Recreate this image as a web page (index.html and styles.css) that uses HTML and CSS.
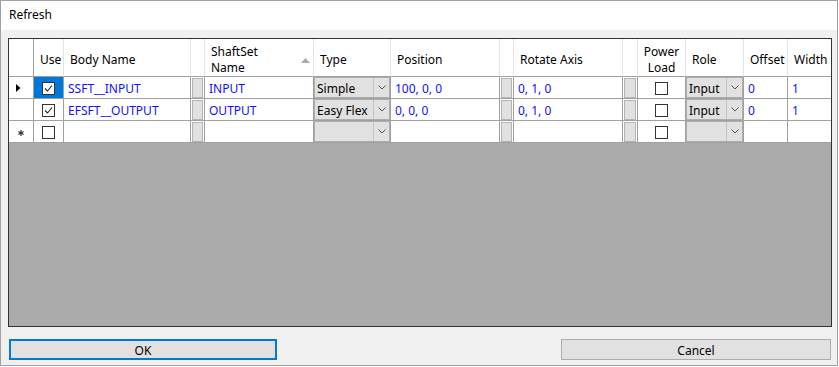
FILE: index.html
```html
<!DOCTYPE html>
<html lang="en">
<head>
    <meta charset="UTF-8">
    <title>Refresh</title>
    <link rel="stylesheet" href="styles.css">
</head>
<body>

<div class="dialog">
    <div class="titlebar">Refresh</div>

    <div class="content">
        <div class="grid">
            <table class="rows">
                <tr>
                    <th class="w-hdr"></th>
                    <th class="w-use">Use</th>
                    <th class="w-body">Body Name</th>
                    <th class="w-btn"></th>
                    <th class="w-shaft">
                        <div class="sort-head">
                            <span>ShaftSet<br>Name</span>
                            <svg class="sort-arrow" width="9" height="5" viewBox="0 0 9 5"><polygon points="0,5 4.5,0 9,5" fill="#a8a8a8"/></svg>
                        </div>
                    </th>
                    <th class="w-type">Type</th>
                    <th class="w-pos">Position</th>
                    <th class="w-btn"></th>
                    <th class="w-rot">Rotate Axis</th>
                    <th class="w-btn2"></th>
                    <th class="w-power center">Power<br>Load</th>
                    <th class="w-role">Role</th>
                    <th class="w-offset">Offset</th>
                    <th class="w-width last">Width</th>
                </tr>
                <tr>
                    <td class="rowhead">
                        <svg width="5" height="8" viewBox="0 0 5 8"><polygon points="0,0 4.5,4 0,8" fill="#000"/></svg>
                    </td>
                    <td class="check selected">
                        <span class="box"><svg width="11" height="11" viewBox="0 0 11 11"><polyline points="2,5.5 4.5,8 9,2.5" fill="none" stroke="#222" stroke-width="1.1"/></svg></span>
                    </td>
                    <td class="txt">SSFT__INPUT</td>
                    <td class="btn-cell"><span class="cell-btn"></span></td>
                    <td class="txt">INPUT</td>
                    <td class="combo-cell">
                        <div class="combo"><span class="combo-text">Simple</span><span class="combo-arrow"><svg width="8" height="5" viewBox="0 0 8 5"><polyline points="0.5,0.5 4,4 7.5,0.5" fill="none" stroke="#555" stroke-width="1"/></svg></span></div>
                    </td>
                    <td class="txt">100, 0, 0</td>
                    <td class="btn-cell"><span class="cell-btn"></span></td>
                    <td class="txt">0, 1, 0</td>
                    <td class="btn-cell"><span class="cell-btn"></span></td>
                    <td class="check"><span class="box"></span></td>
                    <td class="combo-cell">
                        <div class="combo"><span class="combo-text">Input</span><span class="combo-arrow"><svg width="8" height="5" viewBox="0 0 8 5"><polyline points="0.5,0.5 4,4 7.5,0.5" fill="none" stroke="#555" stroke-width="1"/></svg></span></div>
                    </td>
                    <td class="txt">0</td>
                    <td class="txt last">1</td>
                </tr>
                <tr>
                    <td class="rowhead"></td>
                    <td class="check">
                        <span class="box"><svg width="11" height="11" viewBox="0 0 11 11"><polyline points="2,5.5 4.5,8 9,2.5" fill="none" stroke="#222" stroke-width="1.1"/></svg></span>
                    </td>
                    <td class="txt">EFSFT__OUTPUT</td>
                    <td class="btn-cell"><span class="cell-btn"></span></td>
                    <td class="txt">OUTPUT</td>
                    <td class="combo-cell">
                        <div class="combo"><span class="combo-text">Easy Flex</span><span class="combo-arrow"><svg width="8" height="5" viewBox="0 0 8 5"><polyline points="0.5,0.5 4,4 7.5,0.5" fill="none" stroke="#555" stroke-width="1"/></svg></span></div>
                    </td>
                    <td class="txt">0, 0, 0</td>
                    <td class="btn-cell"><span class="cell-btn"></span></td>
                    <td class="txt">0, 1, 0</td>
                    <td class="btn-cell"><span class="cell-btn"></span></td>
                    <td class="check"><span class="box"></span></td>
                    <td class="combo-cell">
                        <div class="combo"><span class="combo-text">Input</span><span class="combo-arrow"><svg width="8" height="5" viewBox="0 0 8 5"><polyline points="0.5,0.5 4,4 7.5,0.5" fill="none" stroke="#555" stroke-width="1"/></svg></span></div>
                    </td>
                    <td class="txt">0</td>
                    <td class="txt last">1</td>
                </tr>
                <tr>
                    <td class="rowhead newrow">
                        <svg width="6" height="6" viewBox="0 0 6 6"><g stroke="#333" stroke-width="1.2"><line x1="3" y1="0" x2="3" y2="6"/><line x1="0.4" y1="1.5" x2="5.6" y2="4.5"/><line x1="0.4" y1="4.5" x2="5.6" y2="1.5"/></g></svg>
                    </td>
                    <td class="check"><span class="box"></span></td>
                    <td class="txt"></td>
                    <td class="btn-cell"><span class="cell-btn"></span></td>
                    <td class="txt"></td>
                    <td class="combo-cell">
                        <div class="combo"><span class="combo-text"></span><span class="combo-arrow"><svg width="8" height="5" viewBox="0 0 8 5"><polyline points="0.5,0.5 4,4 7.5,0.5" fill="none" stroke="#555" stroke-width="1"/></svg></span></div>
                    </td>
                    <td class="txt"></td>
                    <td class="btn-cell"><span class="cell-btn"></span></td>
                    <td class="txt"></td>
                    <td class="btn-cell"><span class="cell-btn"></span></td>
                    <td class="check"><span class="box"></span></td>
                    <td class="combo-cell">
                        <div class="combo"><span class="combo-text"></span><span class="combo-arrow"><svg width="8" height="5" viewBox="0 0 8 5"><polyline points="0.5,0.5 4,4 7.5,0.5" fill="none" stroke="#555" stroke-width="1"/></svg></span></div>
                    </td>
                    <td class="txt"></td>
                    <td class="txt last"></td>
                </tr>
            </table>
        </div>

        <div class="actions">
            <button class="btn btn-ok">OK</button>
            <button class="btn btn-cancel">Cancel</button>
        </div>
    </div>
</div>

</body>
</html>
```

FILE: styles.css
```css
* {
    box-sizing: border-box;
}
body {
    margin: 0;
    background: #fff;
    font-family: "Noto Sans", "Open Sans", sans-serif;
    font-size: 12px;
    color: #000;
}
.dialog {
    width: 838px;
    height: 366px;
    border: 1px solid #a0a0a0;
    display: flex;
    flex-direction: column;
}
.titlebar {
    height: 29px;
    line-height: 28px;
    padding-left: 8px;
    background: #fff;
}
.content {
    flex: 1;
    background: #f0f0f0;
    padding: 8px 0 0 7px;
}
.grid {
    width: 824px;
    height: 289px;
    border: 1px solid #333;
    background: #ababab;
}
.rows {
    width: 822px;
    table-layout: fixed;
    border-collapse: separate;
    border-spacing: 0;
}
th, td {
    padding: 0;
    height: 22px;
    background: #fff;
    border-right: 1px solid #a0a0a0;
    border-bottom: 1px solid #a0a0a0;
    white-space: nowrap;
    overflow: hidden;
    vertical-align: middle;
}
th {
    height: 38px;
    padding: 5px 0 0 6px;
    font-weight: normal;
    text-align: left;
    line-height: 16px;
    border-right-color: #e3e3e3;
}
th.w-hdr {
    border-right-color: #a0a0a0;
}
th.center {
    text-align: center;
    padding-left: 0;
}
.last {
    border-right: none;
}

.w-hdr { width: 25px; }
.w-use { width: 30px; }
.w-body { width: 127px; }
.w-btn { width: 14px; }
.w-btn2 { width: 15px; }
.w-shaft { width: 109px; }
.w-type { width: 77px; }
.w-pos { width: 109px; }
.w-rot { width: 109px; }
.w-power { width: 48px; }
.w-role { width: 58px; }
.w-offset { width: 44px; }
.w-width { width: 43px; }

.sort-head {
    display: flex;
    align-items: center;
    justify-content: space-between;
    padding-right: 3px;
}
.sort-arrow {
    display: block;
}

.rowhead {
    padding-left: 7px;
}
.rowhead svg {
    display: block;
}
.rowhead.newrow {
    padding: 3px 0 0 9px;
}
.txt {
    padding: 1px 0 0 4px;
    color: #1010ff;
}
.check {
    text-align: center;
}
.check.selected {
    background: #0078d7;
}
.box {
    display: inline-block;
    width: 13px;
    height: 13px;
    border: 1px solid #333;
    background: #fff;
    vertical-align: middle;
}
.box svg {
    display: block;
}

.btn-cell {
    padding: 1px 1px 0 1px;
}
.cell-btn {
    display: block;
    height: 20px;
    background: #e1e1e1;
    border: 1px solid #b4b4b4;
}

.combo-cell {
    padding: 0;
}
.combo {
    display: flex;
    height: 21px;
    background: #e1e1e1;
    border: 1px solid #adadad;
}
.combo-text {
    flex: 1;
    padding: 1px 0 0 2px;
    line-height: 19px;
    color: #000;
    border-right: 1px solid #c4c4c4;
}
.combo-arrow {
    width: 15px;
    display: flex;
    align-items: center;
    justify-content: center;
}
.combo-arrow svg {
    display: block;
}

.actions {
    display: flex;
    justify-content: space-between;
    width: 824px;
    margin-top: 12px;
    padding: 0 1px;
}
.btn {
    height: 21px;
    padding: 1px 0 0;
    font-family: inherit;
    font-size: 12px;
    color: #000;
    background: #e1e1e1;
    border: 1px solid #adadad;
}
.btn-ok {
    width: 268px;
    border: 2px solid #0078d7;
}
.btn-cancel {
    width: 270px;
}
```
